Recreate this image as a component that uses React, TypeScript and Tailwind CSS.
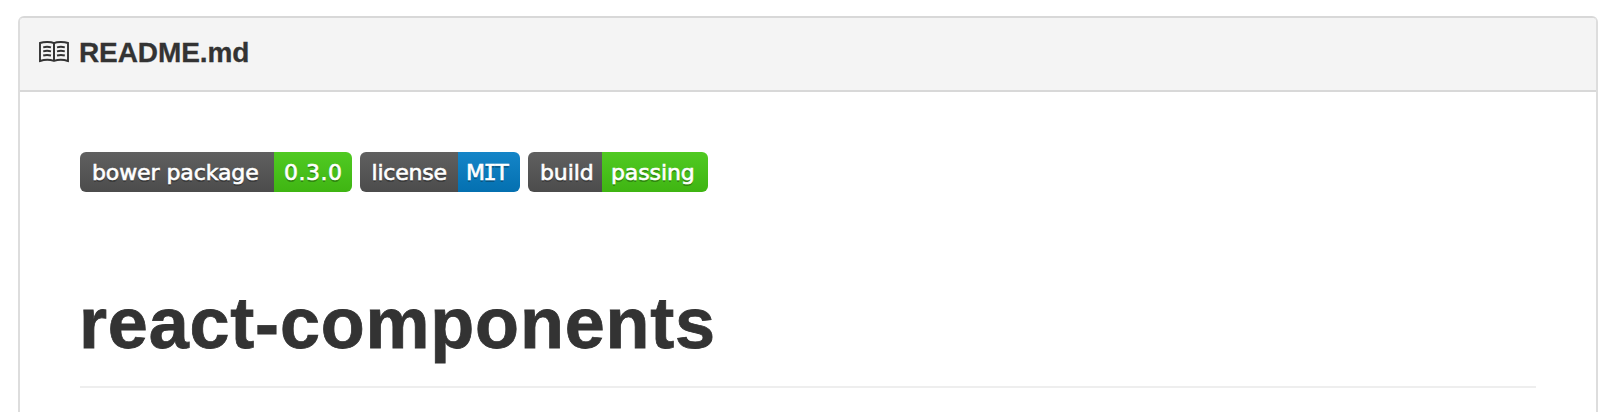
import type { ReactNode } from 'react';

type BadgeProps = {
  label: string;
  value: ReactNode;
  labelClass: string;
  valueClass: string;
};

function BookIcon() {
  return (
    <svg className="h-[22px] w-[30px] shrink-0" viewBox="0 0 30 22" fill="none" stroke="#333" strokeWidth="1.9">
      <path d="M15 2.2C12 .6 5 .6 1 2v18c4-1.400 10.400-1.400 14-.1 3.600-1.300 10-1.300 14 .1V2C25 .6 18 .6 15 2.200Z" />
      <path d="M15 2v18" strokeWidth="2" />
      <path
        d="M4.200 6.300Q8 5.300 12 6.300M4.200 10.300Q8 9.300 12 10.300M4.200 14.500Q8 13.500 12 14.500M18 6.300Q22 5.300 25.800 6.300M18 10.300Q22 9.300 25.800 10.300M18 14.500Q22 13.500 25.800 14.500"
        strokeWidth="1.900"
      />
    </svg>
  );
}

function Badge({ label, value, labelClass, valueClass }: BadgeProps) {
  return (
    <span className="flex h-10 overflow-hidden rounded-[6px] font-['DejaVu_Sans',sans-serif] text-[22px] leading-[41px] whitespace-nowrap text-white [-webkit-text-stroke:0.6px_white] [text-shadow:0_2px_0_rgba(1,1,1,0.3)]">
      <span className={`bg-linear-to-b from-[#606060] to-[#4c4c4c] pl-3 ${labelClass}`}>{label}</span>
      <span className={`bg-linear-to-b ${valueClass}`}>{value}</span>
    </span>
  );
}

export default function App() {
  return (
    <div className="h-[412px] overflow-hidden bg-white pt-4 pr-[14px] pl-[18px] font-['Liberation_Sans',Arial,sans-serif] text-[#333]">
      <article className="h-[420px] rounded-t-[6px] border-2 border-[#ddd] border-t-[#d8d8d8]">
        <header className="flex h-[74px] items-start gap-[10px] rounded-t-[4px] border-b-2 border-[#d8d8d8] bg-[#f4f4f4] pt-[18px] pl-[19px]">
          <span className="pt-[5px]">
            <BookIcon />
          </span>
          <h3 className="pt-px text-[28px] leading-8 font-bold tracking-[-0.1px] [-webkit-text-stroke:0.3px_#333]">
            README.md
          </h3>
        </header>
        <div className="px-[60px] pt-[60px]">
          <div className="flex gap-2">
            <Badge
              label="bower package"
              value="0.3.0"
              labelClass="w-[194px] tracking-[-0.1px]"
              valueClass="w-[78px] pl-[10px] tracking-[0.5px] from-[#50ca22] to-[#3fb512]"
            />
            <Badge
              label="license"
              value={
                <>
                  M<span className="-mx-[1.5px] font-['DejaVu_Sans_Mono',monospace]">I</span>T
                </>
              }
              labelClass="w-[98px] -indent-[0.5px] tracking-[-0.2px]"
              valueClass="w-[62px] pl-2 from-[#1485c8] to-[#0470b0]"
            />
            <Badge
              label="build"
              value="passing"
              labelClass="w-[74px] tracking-[-0.1px]"
              valueClass="w-[106px] pl-[9px] tracking-[-0.1px] from-[#50ca22] to-[#3fb512]"
            />
          </div>
          <h1 className="mt-[88px] h-[108px] border-b-2 border-[#eee] -indent-px text-[72px] leading-[86px] font-bold tracking-[0.8px] [-webkit-text-stroke:0.8px_#333]">
            react-components
          </h1>
        </div>
      </article>
    </div>
  );
}
